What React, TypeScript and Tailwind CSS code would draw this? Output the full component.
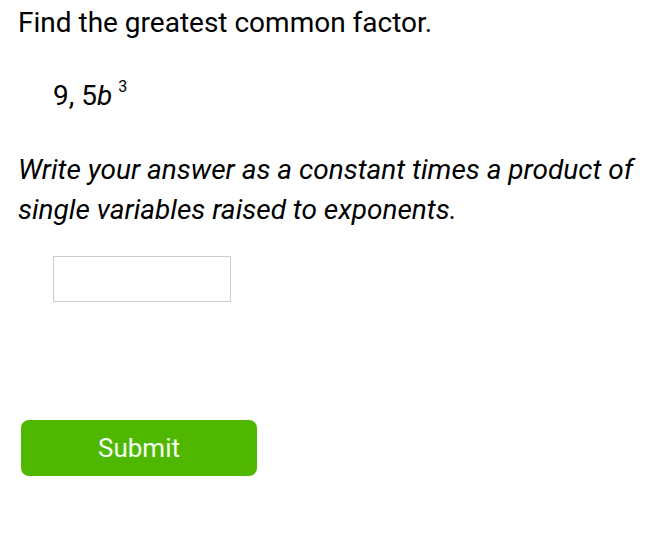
export default function App() {
  return (
    <div className="w-[670px] h-[560px] bg-white text-black font-['Roboto',sans-serif]">
      <div className="pl-[18px] pt-[3px]">
        <h1 className="text-[28px] leading-[40px] font-normal">Find the greatest common factor.</h1>
        <div className="pl-[35px] mt-[33px] text-[28px] leading-[40px] flex items-start">
          <span>9, 5</span>
          <span className="italic">b</span>
          <span className="text-[16px] leading-none ml-[6px] mt-[3px]">3</span>
        </div>
        <p className="mt-[34px] text-[28px] leading-[40px] italic pr-[20px]">
          Write your answer as a constant times a product of single variables raised to exponents.
        </p>
        <div className="pl-[35px] mt-[26px]">
          <input
            type="text"
            className="block w-[178px] h-[46px] border border-[#cccccc] outline-none"
          />
        </div>
        <button className="block ml-[3px] mt-[118px] w-[236px] h-[56px] rounded-[8px] bg-[#4fb700] text-[#f4fff0] text-[26px]">
          Submit
        </button>
      </div>
    </div>
  );
}
